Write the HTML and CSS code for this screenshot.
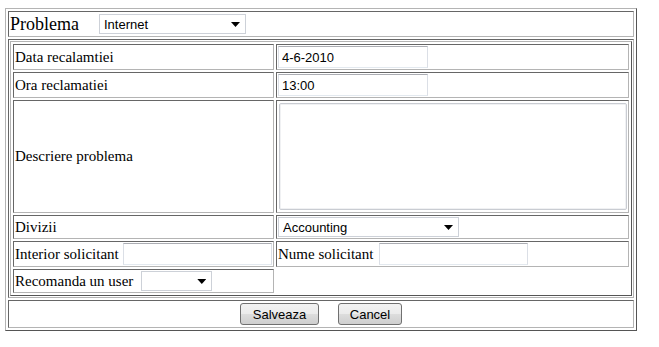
FILE: index.html
```html
<!DOCTYPE html>
<html>
<head>
<meta charset="utf-8">
<title>Reclamatie</title>
<link rel="stylesheet" href="styles.css">
</head>
<body>
<table class="frame">
  <tr>
    <td class="cell">
      <div class="c head">
        <span class="title">Problema</span>
        <span class="sel sel-problem"><select><option>Internet</option></select></span>
      </div>
    </td>
  </tr>
  <tr>
    <td class="cell">
      <table class="inner">
        <tr class="r-date">
          <td class="cell left"><div class="c">Data recalamtiei</div></td>
          <td class="cell"><div class="c"><input class="txt" type="text" value="4-6-2010"></div></td>
        </tr>
        <tr class="r-hour">
          <td class="cell"><div class="c">Ora reclamatiei</div></td>
          <td class="cell"><div class="c"><input class="txt" type="text" value="13:00"></div></td>
        </tr>
        <tr class="r-desc">
          <td class="cell"><div class="c">Descriere problema</div></td>
          <td class="cell"><div class="c"><textarea class="area"></textarea></div></td>
        </tr>
        <tr class="r-div">
          <td class="cell"><div class="c">Divizii</div></td>
          <td class="cell"><div class="c"><span class="sel sel-div"><select><option>Accounting</option></select></span></div></td>
        </tr>
        <tr class="r-int">
          <td class="cell"><div class="c gap-int">Interior solicitant<input class="txt txt-s" type="text"></div></td>
          <td class="cell"><div class="c gap-name">Nume solicitant<input class="txt txt-s" type="text"></div></td>
        </tr>
        <tr class="r-rec">
          <td class="cell"><div class="c gap">Recomanda un user<span class="sel sel-user"><select><option></option></select></span></div></td>
        </tr>
      </table>
    </td>
  </tr>
  <tr>
    <td class="cell">
      <div class="c btns">
        <button class="btn btn-save" type="button">Salveaza</button>
        <button class="btn btn-cancel" type="button">Cancel</button>
      </div>
    </td>
  </tr>
</table>
</body>
</html>
```

FILE: styles.css
```css
html, body {
  background: #fff;
}
body {
  margin: 8px 0 0 5px;
  font-family: "Liberation Serif", "Times New Roman", serif;
  font-size: 15px;
  color: #000;
}
.frame, .inner {
  box-sizing: border-box;
  border-collapse: separate;
  border-spacing: 2px;
  border: 1px solid;
  border-color: #b4b4b4 #555 #555 #b4b4b4;
}
.frame {
  width: 632px;
}
.inner {
  width: 100%;
  table-layout: fixed;
}
.cell {
  padding: 1px;
  border: 1px solid;
  border-color: #666 #b4b4b4 #b4b4b4 #666;
  vertical-align: middle;
}
.left {
  box-sizing: border-box;
  width: 261px;
}
.c {
  display: flex;
  align-items: center;
  height: 22px;
  white-space: nowrap;
}
.head {
  height: 22px;
}
.title {
  font-size: 18px;
}
.gap {
  gap: 8px;
}
.gap-int {
  gap: 4px;
}
.gap-name {
  gap: 6px;
}
.r-desc .c { height: 109px; }
.r-div .c { height: 20px; }
.r-rec .c { height: 20px; }
.btns {
  height: 24px;
  justify-content: center;
  gap: 19px;
}

.txt {
  box-sizing: border-box;
  width: 150px;
  height: 22px;
  margin: 0;
  padding: 0 3px;
  border: 1px solid;
  border-color: #abadb3 #dbdfe6 #e3e9ef #dbdfe6;
  font-family: "Liberation Sans", Arial, sans-serif;
  font-size: 13px;
  color: #000;
  background: #fff;
  outline: none;
}
.txt-s {
  width: 149px;
}
.area {
  box-sizing: border-box;
  width: 350px;
  height: 107px;
  margin: 0 0 0 1px;
  border: 1px solid #c9ccd2;
  border-radius: 2px;
  box-shadow: inset 0 0 0 1px #f0f1f3;
  resize: none;
  outline: none;
  background: #fff;
}

.sel {
  position: relative;
  display: inline-block;
  line-height: 0;
}
.sel::after {
  content: "";
  position: absolute;
  right: 6px;
  top: 8px;
  width: 9px;
  height: 5px;
  background: #000;
  clip-path: polygon(0 0, 100% 0, 50% 100%);
  pointer-events: none;
}
.sel select {
  -webkit-appearance: none;
  appearance: none;
  box-sizing: border-box;
  height: 20px;
  margin: 0;
  padding: 0 0 0 4px;
  border: 1px solid #cdd1d8;
  border-radius: 0;
  background: #fff;
  font-family: "Liberation Sans", Arial, sans-serif;
  font-size: 13px;
  color: #000;
  outline: none;
}
.sel-problem {
  margin-left: 20px;
}
.sel-problem select { width: 147px; }
.sel-div select { width: 181px; }
.sel-user select { width: 71px; }

.btn {
  box-sizing: border-box;
  height: 22px;
  margin: 0;
  padding: 0;
  border: 1px solid #707070;
  border-radius: 3px;
  background: linear-gradient(#f2f2f2 0%, #ebebeb 50%, #dddddd 50%, #cfcfcf 100%);
  font-family: "Liberation Sans", Arial, sans-serif;
  font-size: 13px;
  color: #000;
}
.btn-save { width: 79px; }
.btn-cancel { width: 64px; }
```
